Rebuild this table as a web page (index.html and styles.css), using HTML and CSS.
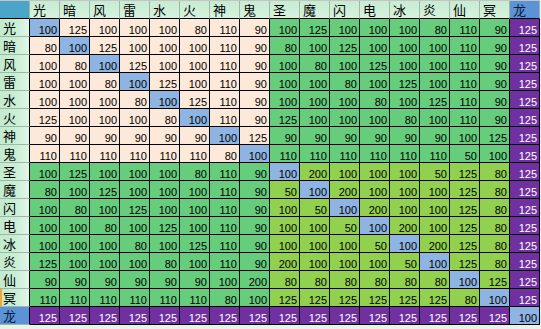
FILE: index.html
```html
<!DOCTYPE html>
<html lang="zh">
<head>
<meta charset="utf-8">
<title>属性相克表</title>
<link rel="stylesheet" href="styles.css">
</head>
<body>
<div class="sheet">
  <div class="corner"></div>
  <div class="ch">光</div><div class="ch">暗</div><div class="ch">风</div><div class="ch">雷</div><div class="ch">水</div><div class="ch">火</div><div class="ch">神</div><div class="ch">鬼</div><div class="ch">圣</div><div class="ch">魔</div><div class="ch">闪</div><div class="ch">电</div><div class="ch">冰</div><div class="ch">炎</div><div class="ch">仙</div><div class="ch">冥</div><div class="ch dragon">龙</div>

  <div class="rh">光</div><div class="d">100</div><div class="p">125</div><div class="p">100</div><div class="p">100</div><div class="p">100</div><div class="p">80</div><div class="p">110</div><div class="p">90</div><div class="g">100</div><div class="g">125</div><div class="g">100</div><div class="g">100</div><div class="g">100</div><div class="g">80</div><div class="g">110</div><div class="g">90</div><div class="v">125</div>

  <div class="rh">暗</div><div class="p">80</div><div class="d">100</div><div class="p">125</div><div class="p">100</div><div class="p">100</div><div class="p">100</div><div class="p">110</div><div class="p">90</div><div class="g">80</div><div class="g">100</div><div class="g">125</div><div class="g">100</div><div class="g">100</div><div class="g">100</div><div class="g">110</div><div class="g">90</div><div class="v">125</div>

  <div class="rh">风</div><div class="p">100</div><div class="p">80</div><div class="d">100</div><div class="p">125</div><div class="p">100</div><div class="p">100</div><div class="p">110</div><div class="p">90</div><div class="g">100</div><div class="g">80</div><div class="g">100</div><div class="g">125</div><div class="g">100</div><div class="g">100</div><div class="g">110</div><div class="g">90</div><div class="v">125</div>

  <div class="rh">雷</div><div class="p">100</div><div class="p">100</div><div class="p">80</div><div class="d">100</div><div class="p">125</div><div class="p">100</div><div class="p">110</div><div class="p">90</div><div class="g">100</div><div class="g">100</div><div class="g">80</div><div class="g">100</div><div class="g">125</div><div class="g">100</div><div class="g">110</div><div class="g">90</div><div class="v">125</div>

  <div class="rh">水</div><div class="p">100</div><div class="p">100</div><div class="p">100</div><div class="p">80</div><div class="d">100</div><div class="p">125</div><div class="p">110</div><div class="p">90</div><div class="g">100</div><div class="g">100</div><div class="g">100</div><div class="g">80</div><div class="g">100</div><div class="g">125</div><div class="g">110</div><div class="g">90</div><div class="v">125</div>

  <div class="rh">火</div><div class="p">125</div><div class="p">100</div><div class="p">100</div><div class="p">100</div><div class="p">80</div><div class="d">100</div><div class="p">110</div><div class="p">90</div><div class="g">125</div><div class="g">100</div><div class="g">100</div><div class="g">100</div><div class="g">80</div><div class="g">100</div><div class="g">110</div><div class="g">90</div><div class="v">125</div>

  <div class="rh">神</div><div class="p">90</div><div class="p">90</div><div class="p">90</div><div class="p">90</div><div class="p">90</div><div class="p">90</div><div class="d">100</div><div class="p">125</div><div class="g">90</div><div class="g">90</div><div class="g">90</div><div class="g">90</div><div class="g">90</div><div class="g">90</div><div class="g">100</div><div class="g">125</div><div class="v">125</div>

  <div class="rh">鬼</div><div class="p">110</div><div class="p">110</div><div class="p">110</div><div class="p">110</div><div class="p">110</div><div class="p">110</div><div class="p">80</div><div class="d">100</div><div class="g">110</div><div class="g">110</div><div class="g">110</div><div class="g">110</div><div class="g">110</div><div class="g">110</div><div class="g">50</div><div class="g">100</div><div class="v">125</div>

  <div class="rh">圣</div><div class="g">100</div><div class="g">125</div><div class="g">100</div><div class="g">100</div><div class="g">100</div><div class="g">80</div><div class="g">110</div><div class="g">90</div><div class="d">100</div><div class="y">200</div><div class="y">100</div><div class="y">100</div><div class="y">100</div><div class="y">50</div><div class="y">125</div><div class="y">80</div><div class="v">125</div>

  <div class="rh">魔</div><div class="g">80</div><div class="g">100</div><div class="g">125</div><div class="g">100</div><div class="g">100</div><div class="g">100</div><div class="g">110</div><div class="g">90</div><div class="y">50</div><div class="d">100</div><div class="y">200</div><div class="y">100</div><div class="y">100</div><div class="y">100</div><div class="y">125</div><div class="y">80</div><div class="v">125</div>

  <div class="rh">闪</div><div class="g">100</div><div class="g">80</div><div class="g">100</div><div class="g">125</div><div class="g">100</div><div class="g">100</div><div class="g">110</div><div class="g">90</div><div class="y">100</div><div class="y">50</div><div class="d">100</div><div class="y">200</div><div class="y">100</div><div class="y">100</div><div class="y">125</div><div class="y">80</div><div class="v">125</div>

  <div class="rh">电</div><div class="g">100</div><div class="g">100</div><div class="g">80</div><div class="g">100</div><div class="g">125</div><div class="g">100</div><div class="g">110</div><div class="g">90</div><div class="y">100</div><div class="y">100</div><div class="y">50</div><div class="d">100</div><div class="y">200</div><div class="y">100</div><div class="y">125</div><div class="y">80</div><div class="v">125</div>

  <div class="rh">冰</div><div class="g">100</div><div class="g">100</div><div class="g">100</div><div class="g">80</div><div class="g">100</div><div class="g">125</div><div class="g">110</div><div class="g">90</div><div class="y">100</div><div class="y">100</div><div class="y">100</div><div class="y">50</div><div class="d">100</div><div class="y">200</div><div class="y">125</div><div class="y">80</div><div class="v">125</div>

  <div class="rh">炎</div><div class="g">125</div><div class="g">100</div><div class="g">100</div><div class="g">100</div><div class="g">80</div><div class="g">100</div><div class="g">110</div><div class="g">90</div><div class="y">200</div><div class="y">100</div><div class="y">100</div><div class="y">100</div><div class="y">50</div><div class="d">100</div><div class="y">125</div><div class="y">80</div><div class="v">125</div>

  <div class="rh">仙</div><div class="g">90</div><div class="g">90</div><div class="g">90</div><div class="g">90</div><div class="g">90</div><div class="g">90</div><div class="g">100</div><div class="g">200</div><div class="y">80</div><div class="y">80</div><div class="y">80</div><div class="y">80</div><div class="y">80</div><div class="y">80</div><div class="d">100</div><div class="y">125</div><div class="v">125</div>

  <div class="rh marked">冥</div><div class="g">110</div><div class="g">110</div><div class="g">110</div><div class="g">110</div><div class="g">110</div><div class="g">110</div><div class="g">80</div><div class="g">100</div><div class="y">125</div><div class="y">125</div><div class="y">125</div><div class="y">125</div><div class="y">125</div><div class="y">125</div><div class="y">80</div><div class="d">100</div><div class="v">125</div>

  <div class="rh dragon">龙</div><div class="v">125</div><div class="v">125</div><div class="v">125</div><div class="v">125</div><div class="v">125</div><div class="v">125</div><div class="v">125</div><div class="v">125</div><div class="v">125</div><div class="v">125</div><div class="v">125</div><div class="v">125</div><div class="v">125</div><div class="v">125</div><div class="v">125</div><div class="v">125</div><div class="d">100</div>
</div>
</body>
</html>
```
FILE: styles.css
```css
html, body {
  margin: 0;
  padding: 0;
}

body {
  background: #e8f3ea;
  width: 541px;
  height: 329px;
  overflow: hidden;
}

.sheet {
  display: grid;
  grid-template-columns: repeat(18, 30px);
  grid-auto-rows: 18px;
  width: 540px;
  border-top: 1px solid #c4c4c4;
  font-family: "Liberation Sans", Arial, sans-serif;
  font-size: 11px;
  color: #000;
}

.sheet > div {
  box-sizing: border-box;
  border-right: 1px solid #000;
  border-bottom: 1px solid #000;
  text-align: right;
  padding: 4px 2px 0 0;
  line-height: 14px;
  overflow: hidden;
  white-space: nowrap;
}

.sheet > .corner {
  background: #4aa5c9;
  border-right-color: #9fb7a8;
  border-bottom-color: #000;
}

.sheet > .ch,
.sheet > .rh {
  font-family: "Noto Sans CJK SC", "Noto Sans", sans-serif;
  font-size: 13px;
  font-weight: 400;
  line-height: 15px;
  text-align: left;
  padding: 1px 0 0 3px;
  color: #000;
}

.sheet > .ch {
  background: linear-gradient(to bottom, #c7ecd2, #d6f2dd);
  border-right-color: #9fb7a8;
}

.sheet > .rh {
  background: linear-gradient(to right, #c3ebcf 0%, #c9eed5 55%, #e2f6e8 100%);
  border-bottom-color: #9fb7a8;
}

.sheet > .rh.marked {
  box-shadow: inset 2px 0 0 #f2a735;
}

.sheet > .dragon {
  background: #5b93d6;
  color: #0d1a3a;
}

.p { background: #fde9d9; }
.g { background: #66cd7c; }
.y { background: #92d050; }
.d { background: #8db4e2; }
.v { background: #7030a0; color: #fff; }
```
